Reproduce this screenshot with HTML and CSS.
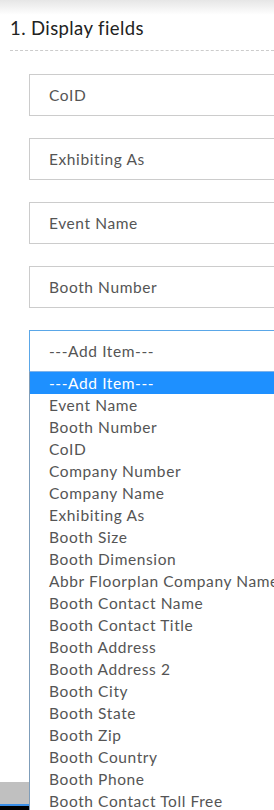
FILE: index.html
```html
<!DOCTYPE html>
<html lang="en">
<head>
    <meta charset="UTF-8">
    <meta name="viewport" content="width=device-width, initial-scale=1.0">
    <title>Display fields</title>
    <link rel="stylesheet" href="styles.css">
</head>
<body>
    <div class="top-shade"></div>
    <div class="panel">
        <h2 class="section-title">1. Display fields</h2>
        <div class="fields">
            <div class="field">CoID</div>
            <div class="field">Exhibiting As</div>
            <div class="field">Event Name</div>
            <div class="field">Booth Number</div>
            <div class="picker">
                <div class="field field-select">---Add Item---</div>
                <ul class="options">
                    <li class="selected">---Add Item---</li>
                    <li>Event Name</li>
                    <li>Booth Number</li>
                    <li>CoID</li>
                    <li>Company Number</li>
                    <li>Company Name</li>
                    <li>Exhibiting As</li>
                    <li>Booth Size</li>
                    <li>Booth Dimension</li>
                    <li>Abbr Floorplan Company Name</li>
                    <li>Booth Contact Name</li>
                    <li>Booth Contact Title</li>
                    <li>Booth Address</li>
                    <li>Booth Address 2</li>
                    <li>Booth City</li>
                    <li>Booth State</li>
                    <li>Booth Zip</li>
                    <li>Booth Country</li>
                    <li>Booth Phone</li>
                    <li>Booth Contact Toll Free</li>
                </ul>
            </div>
        </div>
    </div>
    <div class="footer">
        <div class="footer-bar"></div>
        <div class="footer-dark"></div>
    </div>
</body>
</html>
```

FILE: styles.css
```css
html, body {
    margin: 0;
    padding: 0;
    background: #fff;
    overflow: hidden;
}
body {
    font-family: Lato, 'Open Sans', sans-serif;
    color: #555;
}
.top-shade {
    height: 15px;
    background: linear-gradient(to bottom, #e6e6e6, #ffffff);
}
.panel {
    padding: 0 0 0 10px;
}
.section-title {
    margin: 0;
    padding: 2px 0 11px 0;
    font-size: 18.5px;
    letter-spacing: 0.4px;
    line-height: 22px;
    font-weight: normal;
    color: #222;
    border-bottom: 1px dashed #ccc;
}
.fields {
    padding: 23px 0 0 19px;
    display: flex;
    flex-direction: column;
    gap: 22px;
}
.field {
    height: 40px;
    border: 1px solid #ccc;
    border-right: none;
    padding-left: 19px;
    font-size: 15.5px;
    letter-spacing: 0.6px;
    line-height: 40px;
    color: #555;
    background: #fff;
}
.picker {
    position: relative;
}
.field-select {
    border-color: #5aa7e8;
}
.options {
    position: absolute;
    top: 41px;
    left: 0;
    width: 300px;
    margin: 0;
    padding: 0;
    list-style: none;
    background: #fff;
    border-left: 1px solid #7f9db9;
    border-top: 1px solid #7fb2e8;
    z-index: 2;
}
.options li {
    height: 22px;
    line-height: 22px;
    padding-left: 19px;
    font-size: 15.5px;
    letter-spacing: 0.6px;
    color: #555;
    white-space: nowrap;
}
.options li.selected {
    background: #1e90ff;
    color: #fff;
}
.footer {
    margin-top: 410px;
}
.footer-bar {
    height: 22px;
    background: #c0c0c0;
    border-bottom: 2px solid #3a8ee6;
}
.footer-dark {
    height: 20px;
    background: #000;
}
```
